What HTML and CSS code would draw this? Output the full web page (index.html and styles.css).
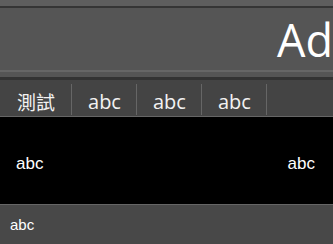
FILE: index.html
```html
<!DOCTYPE html>
<html lang="en">
<head>
    <meta charset="UTF-8" />
    <meta name="viewport" content="width=device-width, initial-scale=1.0" />
    <title>Tabs</title>
    <link rel="stylesheet" href="styles.css">
</head>
<body>
    <!-- Top strip -->
    <div class="top-strip"></div>

    <!-- Header -->
    <div class="header">
        <h1 class="header-title">Ad</h1>
    </div>
    <div class="header-foot"></div>

    <!-- Tab bar -->
    <div class="tabs">
        <a class="tab cjk" href="#">測試</a>
        <a class="tab" href="#">abc</a>
        <a class="tab" href="#">abc</a>
        <a class="tab" href="#">abc</a>
    </div>

    <!-- Main Content -->
    <div class="panel">
        <span>abc</span>
        <span>abc</span>
    </div>

    <!-- Footer -->
    <div class="footer">abc</div>
</body>
</html>
```

FILE: styles.css
```css
body {
    font-family: "Liberation Sans", Arial, sans-serif;
    background-color: #484848;
    color: #fff;
    margin: 0;
    padding: 0;
    overflow: hidden;
}
a {
    color: inherit;
    text-decoration: inherit;
}
.top-strip {
    height: 6px;
    background-color: #5e5e5e;
    border-bottom: 2px solid #353535;
}
/* Header css */
.header {
    height: 62px;
    background-color: #555;
    display: flex;
    align-items: center;
    justify-content: flex-end;
    overflow: hidden;
    white-space: nowrap;
}
.header-title {
    margin: 0;
    font-family: "Open Sans", sans-serif;
    font-size: 45px;
    font-weight: 400;
    line-height: 1;
}
.header-foot {
    height: 5px;
    background-color: #555;
    border-top: 2px solid #666;
    border-bottom: 3px solid #333;
}
/* End */
.tabs {
    display: flex;
    background-color: #444;
    border-bottom: 1px solid #666;
    padding-top: 6px;
    height: 30px;
}
.tab {
    font-family: "Open Sans", "Noto Sans CJK TC", sans-serif;
    font-size: 20px;
    line-height: 27px;
    height: 27px;
    padding: 4px 15px 0 16px;
    margin-top: -2px;
    border-right: 1px solid #666;
    color: #f2f2f2;
}
.tab.cjk {
    padding-left: 17px;
    padding-right: 16px;
    font-family: "Noto Sans CJK TC", sans-serif;
    font-size: 19px;
}
.panel {
    height: 88px;
    background-color: #000;
    border-bottom: 1px solid #666;
    display: flex;
    justify-content: space-between;
    align-items: center;
    padding: 6px 18px 0 16px;
    box-sizing: border-box;
    font-size: 17px;
}
.footer {
    padding: 11px 10px 10px;
    font-size: 15px;
}
```
